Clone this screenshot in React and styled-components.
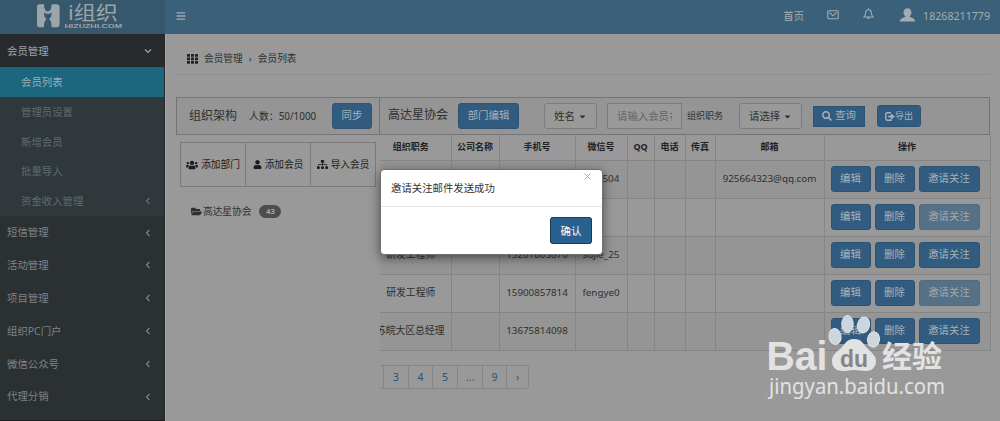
import React from 'react';
import styled, { createGlobalStyle } from 'styled-components';
import { FaBars, FaUsers, FaUser, FaSitemap, FaFolderOpen, FaSearch, FaCaretDown } from 'react-icons/fa';

const GlobalStyle = createGlobalStyle`
    * { box-sizing: border-box; }
    body {
        margin: 0;
        overflow: hidden;
        background: #999;
        color: #2f2f2f;
        font-family: 'Noto Sans', 'Noto Sans CJK SC', sans-serif;
        font-size: 10.4px;
        line-height: 1.4;
    }
    button, input { font-family: inherit; }
`;

const Page = styled.div`
    position: relative;
    display: grid;
    grid-template-columns: 165px 1fr;
    grid-template-rows: 34px 387px;
    height: 421px;
    overflow: hidden;
`;

const Brand = styled.div`
    background: #37586c;
    padding: 3px 0 0 36px;
    svg { overflow: visible; }
`;

const Header = styled.header`
    display: flex;
    align-items: center;
    background: #3a6179;
    color: #a3acb1;
    padding: 0 10px 2px 11px;
`;

const HeaderNav = styled.nav`
    display: flex;
    align-items: center;
    margin-left: auto;
    svg { display: block; }
`;

const HeaderItem = styled.div`
    margin-left: ${(props) => props.gap || 0}px;
    padding-top: ${(props) => props.drop || 0}px;
    padding-bottom: ${(props) => props.lift || 0}px;
    font-size: ${(props) => props.size || 10.4}px;
`;

const Sidebar = styled.aside`
    background: #2b3033;
    border-right: 1px solid #25292b;
    border-bottom: 1px solid #1d2022;
`;

const MenuItem = styled.div`
    display: flex;
    align-items: center;
    justify-content: space-between;
    height: ${(props) => (props.open ? 33 : 32.8)}px;
    padding: 1px 12px 0 7px;
    background: ${(props) => (props.open ? '#272b2d' : 'transparent')};
    color: ${(props) => (props.open ? '#a2a4a5' : '#7d8486')};
`;

const SubMenu = styled.div`
    background: #30383b;
`;

const SubItem = styled.div`
    display: flex;
    align-items: center;
    justify-content: space-between;
    height: ${(props) => (props.active ? 30 : 29.7)}px;
    padding: 1px 12px 0 21px;
    background: ${(props) => (props.active ? '#1a677f' : 'transparent')};
    color: ${(props) => (props.active ? '#9aaeb5' : '#5d6b71')};
`;

const Content = styled.main`
    border-left: 1px solid #a6a6a6;
    padding: 0 10px;
    overflow: hidden;
`;

const Breadcrumb = styled.div`
    display: flex;
    align-items: center;
    gap: 6px;
    height: 41px;
    padding: 10px 0 0 11px;
    border-bottom: 1px solid #8e8e8e;
    font-size: 9.7px;
`;

const Columns = styled.div`
    display: grid;
    grid-template-columns: 204px 610px;
    margin-top: 22px;
`;

const Toolbar = styled.div`
    display: flex;
    align-items: center;
    height: 38px;
    padding: 0 7px 0 ${(props) => (props.flush ? 8 : 12)}px;
    background: #959595;
    border: 1px solid #747474;
    border-left-width: ${(props) => (props.flush ? 0 : 1)}px;
`;

const ToolbarTitle = styled.span`
    font-size: 12px;
    padding-bottom: ${(props) => props.lift || 0}px;
    padding-top: ${(props) => props.drop || 0}px;
`;

const Counter = styled.span`
    margin-left: 12px;
    margin-right: auto;
    padding-top: 2px;
    font-size: 9.9px;
    white-space: nowrap;
`;

const Button = styled.button`
    display: inline-flex;
    align-items: center;
    justify-content: center;
    gap: ${(props) => props.gap || 0}px;
    width: ${(props) => props.w}px;
    height: ${(props) => props.h || 26}px;
    margin: 0 0 0 ${(props) => props.ml || 0}px;
    padding: 0;
    border: 1px solid #2c5373;
    border-radius: ${(props) => (props.square ? 0 : 3)}px;
    background: #315c7f;
    color: #a6b2bb;
    font-size: ${(props) => props.size || 10.4}px;
    line-height: 1.3;
    white-space: nowrap;
    opacity: ${(props) => (props.faded ? 0.65 : 1)};
`;

const Select = styled.div`
    display: flex;
    align-items: center;
    justify-content: space-between;
    width: ${(props) => props.w}px;
    height: 26px;
    margin-left: ${(props) => props.ml}px;
    padding: 0 9px;
    border: 1px solid #7c7c7c;
    border-radius: 3px;
    background: #999;
    white-space: nowrap;
`;

const SearchInput = styled.input`
    width: 75px;
    height: 26px;
    margin-left: 10px;
    padding: 0 9px;
    border: 1px solid #7c7c7c;
    background: #999;
    font-size: 10.4px;
    &::placeholder { color: #646464; opacity: 1; }
`;

const FieldLabel = styled.span`
    width: 37px;
    margin-left: 5px;
    padding-top: 1px;
    font-size: 9px;
    white-space: nowrap;
`;

const Actions = styled.div`
    display: flex;
    width: 196px;
    height: 45px;
    margin: 7px 0 0 4px;
    border: 1px solid #7a7a7a;
`;

const Action = styled.div`
    display: flex;
    flex: 1;
    align-items: center;
    justify-content: center;
    gap: 3px;
    color: #1c1c1c;
    font-size: 9.7px;
    white-space: nowrap;
    & + & { border-left: 1px solid #7a7a7a; }
`;

const TreeNode = styled.div`
    display: flex;
    align-items: center;
    gap: 1px;
    margin: 18px 0 0 15px;
    font-size: 9.7px;
`;

const Badge = styled.span`
    width: 22px;
    height: 13px;
    margin-left: 7px;
    border-radius: 7px;
    background: #4d4d4d;
    color: #a5a5a5;
    font-size: 7.8px;
    font-weight: 700;
    line-height: 13px;
    text-align: center;
`;

const Table = styled.table`
    width: 610px;
    border-collapse: collapse;
    table-layout: fixed;
    font-size: 9.8px;
`;

const Th = styled.th`
    height: 25px;
    padding: 0;
    border-right: 1px solid #858585;
    border-bottom: 1px solid #858585;
    font-size: 9px;
    color: #222;
    &:first-child { padding-right: 9px; }
`;

const Tr = styled.tr`
    background: ${(props) => (props.striped ? '#959595' : '#999')};
`;

const Td = styled.td`
    height: 38px;
    padding: 0;
    border-right: 1px solid #858585;
    border-bottom: 1px solid #858585;
    text-align: center;
    white-space: nowrap;
    overflow: hidden;
`;

const Role = styled.div`
    display: flex;
    justify-content: ${(props) => (props.clipped ? 'flex-end' : 'center')};
    padding-right: ${(props) => (props.clipped ? 6 : 9)}px;
    overflow: hidden;
`;

const RowButtons = styled.div`
    display: flex;
    gap: 4px;
    padding-left: 6px;
`;

const Pagination = styled.div`
    display: flex;
    width: 149px;
    height: 24px;
    margin-top: 14px;
    border: 1px solid #858585;
    border-left: 0;
    border-radius: 0 3px 3px 0;
    color: #2a5275;
`;

const PageLink = styled.span`
    width: ${(props) => props.w}px;
    line-height: 23px;
    text-align: center;
    & + & { border-left: 1px solid #858585; }
`;

const Dialog = styled.div`
    position: absolute;
    left: 380px;
    top: 169px;
    width: 223px;
    height: 86px;
    border: 1px solid #6f6f6f;
    border-radius: 4px;
    background: #fff;
    box-shadow: 0 3px 11px rgba(0, 0, 0, .5);
`;

const DialogBody = styled.div`
    display: flex;
    justify-content: space-between;
    height: 37px;
    padding: 11px 10px 0 10px;
    border-bottom: 1px solid #e5e5e5;
    color: #333;
`;

const CloseIcon = styled.svg`
    margin-top: -9px;
`;

const DialogFooter = styled.div`
    display: flex;
    justify-content: flex-end;
    padding: 10px 10px 0;
`;

const ConfirmButton = styled.button`
    width: 42px;
    height: 27px;
    padding: 0;
    border: 1px solid #1b3f5d;
    border-radius: 3px;
    outline: 1px dotted #333;
    outline-offset: -1px;
    background: #286090;
    color: #fff;
    font-size: 10.4px;
`;

const Watermark = styled.svg`
    position: absolute;
    left: 760px;
    top: 308px;
    font-family: 'Noto Sans', 'Noto Sans CJK SC', sans-serif;
`;

const Chevron = ({ down }) => (
    <svg width="8" height="8" viewBox="0 0 8 8" fill="none" stroke="currentColor" strokeWidth="1.2">
        <path d={down ? 'M1 2.5l3 3 3-3' : 'M5.5 1l-3 3 3 3'} />
    </svg>
);

const GridIcon = () => (
    <svg width="11" height="10" viewBox="0 0 11 10" fill="#222">
        {[0, 4, 8].map((x) => [0, 3.5, 7].map((y) => <rect key={`${x}-${y}`} x={x} y={y} width="3" height="2.7" rx=".3" />))}
    </svg>
);

const ExportIcon = () => (
    <svg width="10" height="9" viewBox="0 0 10 9">
        <path d="M6 .8H2.3Q.8.8.8 2.3v4.4q0 1.5 1.500 1.500H6V6.8" fill="none" stroke="currentColor" strokeWidth="1.4" />
        <path d="M3.4 3.4H6V1.6l4 2.9-4 2.9V5.6H3.4z" fill="currentColor" />
    </svg>
);

const Logo = () => (
    <svg width="90" height="28" viewBox="0 0 90 28" fill="#9ca5aa">
        <path d="M3 1.3h5c.3 5.500 1.500 7 3.800 7s3.500-1.500 3.800-7h5q3 0 3 3v17q0 3-3 3h-5c0-4-.3-6-2.500-8.600 2-1 2.500-3 2.500-6.500-2 2-5.600 2-7.600 0 0 3.500.5 5.500 2.500 6.500-2.200 2.600-2.500 4.600-2.500 8.600H3q-2 0-2-3v-17q0-3 2-3z" />
        <circle cx="11.900" cy="4.300" r="3" fill="#37586c" />
        <text x="32" y="17" fontSize="19.500" fontFamily="'Noto Sans', 'Noto Sans CJK SC', sans-serif" textLength="50" lengthAdjust="spacingAndGlyphs">i组织</text>
        <text x="28.500" y="25" fontSize="4.800" fontFamily="'Liberation Sans', sans-serif" fontWeight="bold" textLength="57.500" lengthAdjust="spacingAndGlyphs">HIZUZHI.COM</text>
    </svg>
);

const menu = ['短信管理', '活动管理', '项目管理', '组织PC门户', '微信公众号', '代理分销'];
const subMenu = ['会员列表', '管理员设置', '新增会员', '批量导入', '资金收入管理'];

const columns = [
    ['组织职务', 71],
    ['公司名称', 48],
    ['手机号', 76],
    ['微信号', 52],
    ['QQ', 27],
    ['电话', 31],
    ['传真', 30],
    ['邮箱', 109],
    ['操作', 166],
];

const rows = [
    { wechat: 'lim0504', mail: '925664323@qq.com' },
    { invited: true },
    { role: '研发工程师', phone: '15201805870', wechat: 'sujie_25' },
    { role: '研发工程师', phone: '15900857814', wechat: 'fengye0', invited: true },
    { role: '苏皖大区总经理', phone: '13675814098', clipped: true },
];

const TopBar = () => (
    <Header>
        <FaBars size={10} />
        <HeaderNav>
            <HeaderItem drop={1}>首页</HeaderItem>
            <HeaderItem gap={23} lift={3}>
                <svg width="12" height="10" viewBox="0 0 12 10" fill="none" stroke="currentColor" strokeWidth="1.1">
                    <rect x=".8" y=".8" width="10.400" height="8" rx=".7" />
                    <path d="M2.500 2.500L6 5.800l3.500-3.300" />
                </svg>
            </HeaderItem>
            <HeaderItem gap={24} lift={4}>
                <svg width="11" height="12" viewBox="0 0 11 12" fill="none" stroke="currentColor" strokeWidth="1.1">
                    <path d="M1 9c1.500-1.300 1.600-2.500 1.700-4.500C2.800 2.600 4 1.700 5.500 1.700s2.700.9 2.800 2.800C8.400 6.500 8.500 7.700 10 9zM5.500.3v1.200M4.500 9.500q1 2 2 0" />
                </svg>
            </HeaderItem>
            <HeaderItem gap={25} lift={2}>
                <svg width="17" height="14" viewBox="0 0 17 14" fill="currentColor">
                    <ellipse cx="8.500" cy="4.500" rx="4" ry="4.300" />
                    <path d="M6.500 7h4v1.700l4 1.700q1.500.8 1.700 3.200H.8q.2-2.400 1.700-3.200l4-1.700z" />
                </svg>
            </HeaderItem>
            <HeaderItem gap={7} drop={1} size={10.65}>18268211779</HeaderItem>
        </HeaderNav>
    </Header>
);

const SideMenu = () => (
    <Sidebar>
        <MenuItem open>会员管理<Chevron down /></MenuItem>
        <SubMenu>
            {subMenu.map((item, i) => (
                <SubItem key={item} active={i === 0}>
                    {item}
                    {i === 4 && <Chevron />}
                </SubItem>
            ))}
        </SubMenu>
        {menu.map((item) => <MenuItem key={item}>{item}<Chevron /></MenuItem>)}
    </Sidebar>
);

const Departments = () => (
    <div>
        <Toolbar>
            <ToolbarTitle drop={1}>组织架构</ToolbarTitle>
            <Counter>人数：50/1000</Counter>
            <Button w={40}>同步</Button>
        </Toolbar>
        <Actions>
            <Action><FaUsers size={12} />添加部门</Action>
            <Action><FaUser size={9} />添加会员</Action>
            <Action><FaSitemap size={11} />导入会员</Action>
        </Actions>
        <TreeNode>
            <FaFolderOpen size={11} />高达星协会<Badge>43</Badge>
        </TreeNode>
    </div>
);

const Members = () => (
    <div>
        <Toolbar flush>
            <ToolbarTitle lift={2}>高达星协会</ToolbarTitle>
            <Button w={61} ml={10}>部门编辑</Button>
            <Select w={53} ml={25}>姓名<FaCaretDown size={9} /></Select>
            <SearchInput placeholder="请输入会员名" />
            <FieldLabel>组织职务</FieldLabel>
            <Select w={63} ml={15}>请选择<FaCaretDown size={9} /></Select>
            <Button w={52} h={21} ml={11} gap={3} square><FaSearch size={10} />查询</Button>
            <Button w={44} h={22} ml={12} size={9}><ExportIcon />导出</Button>
        </Toolbar>
        <Table>
            <colgroup>
                {columns.map(([name, width]) => <col key={name} width={width} />)}
            </colgroup>
            <thead>
                <tr>{columns.map(([name]) => <Th key={name}>{name}</Th>)}</tr>
            </thead>
            <tbody>
                {rows.map((row, i) => (
                    <Tr key={i} striped={i % 2 === 0}>
                        <Td><Role clipped={row.clipped}>{row.role}</Role></Td>
                        <Td />
                        <Td>{row.phone}</Td>
                        <Td>{row.wechat}</Td>
                        <Td />
                        <Td />
                        <Td />
                        <Td>{row.mail}</Td>
                        <Td>
                            <RowButtons>
                                <Button w={40}>编辑</Button>
                                <Button w={40}>删除</Button>
                                <Button w={61} faded={row.invited}>邀请关注</Button>
                            </RowButtons>
                        </Td>
                    </Tr>
                ))}
            </tbody>
        </Table>
        <Pagination>
            <PageLink w={3} />
            <PageLink w={25}>3</PageLink>
            <PageLink w={24}>4</PageLink>
            <PageLink w={25}>5</PageLink>
            <PageLink w={25}>...</PageLink>
            <PageLink w={24}>9</PageLink>
            <PageLink w={22}>›</PageLink>
        </Pagination>
    </div>
);

const BaiduMark = () => (
    <Watermark width="200" height="100" viewBox="0 0 200 100" fill="#e2e2e2">
        <text x="6.500" y="61.500" fontSize="40" fontWeight="700" fontFamily="'Liberation Sans', sans-serif" textLength="61" lengthAdjust="spacingAndGlyphs">Bai</text>
        <g fill="#ccd6df" stroke="#e2e2e2">
            <ellipse cx="75" cy="28.500" rx="6" ry="8" transform="rotate(-10 75 28.500)" />
            <ellipse cx="87.500" cy="16" rx="5.700" ry="8.500" />
            <ellipse cx="103.500" cy="17" rx="6" ry="8" transform="rotate(15 103.500 17)" />
            <ellipse cx="113.500" cy="31.500" rx="6" ry="7.700" transform="rotate(10 113.500 31.500)" />
        </g>
        <path d="M94 31c-8 0-9 6-14 10-5 4-8 7-8 12 0 7 5 10 11 10 5 0 7-1 11-1s7 1 12 1c6 0 10-4 10-10 0-5-4-8-8-12-5-5-6-10-14-10z" />
        <text x="80" y="58.500" fill="#858585" fontSize="24" fontWeight="700" fontFamily="'Liberation Sans', sans-serif" textLength="28" lengthAdjust="spacingAndGlyphs">du</text>
        <text x="122" y="59" fontSize="30" fontWeight="700" textLength="60" lengthAdjust="spacingAndGlyphs">经验</text>
        <text x="9" y="85.500" fontSize="21" textLength="176" lengthAdjust="spacingAndGlyphs">jingyan.baidu.com</text>
    </Watermark>
);

const App = () => (
    <Page>
        <GlobalStyle />
        <Brand><Logo /></Brand>
        <TopBar />
        <SideMenu />
        <Content>
            <Breadcrumb>
                <GridIcon />
                <span>会员管理</span>
                <span>›</span>
                <span>会员列表</span>
            </Breadcrumb>
            <Columns>
                <Departments />
                <Members />
            </Columns>
        </Content>
        <Dialog>
            <DialogBody>
                邀请关注邮件发送成功
                <CloseIcon width="9" height="9" viewBox="0 0 9 9" stroke="#aaa" strokeWidth="1">
                    <path d="M1.500 1.500l6 6M7.500 1.500l-6 6" />
                </CloseIcon>
            </DialogBody>
            <DialogFooter>
                <ConfirmButton>确认</ConfirmButton>
            </DialogFooter>
        </Dialog>
        <BaiduMark />
    </Page>
);

export default App;
